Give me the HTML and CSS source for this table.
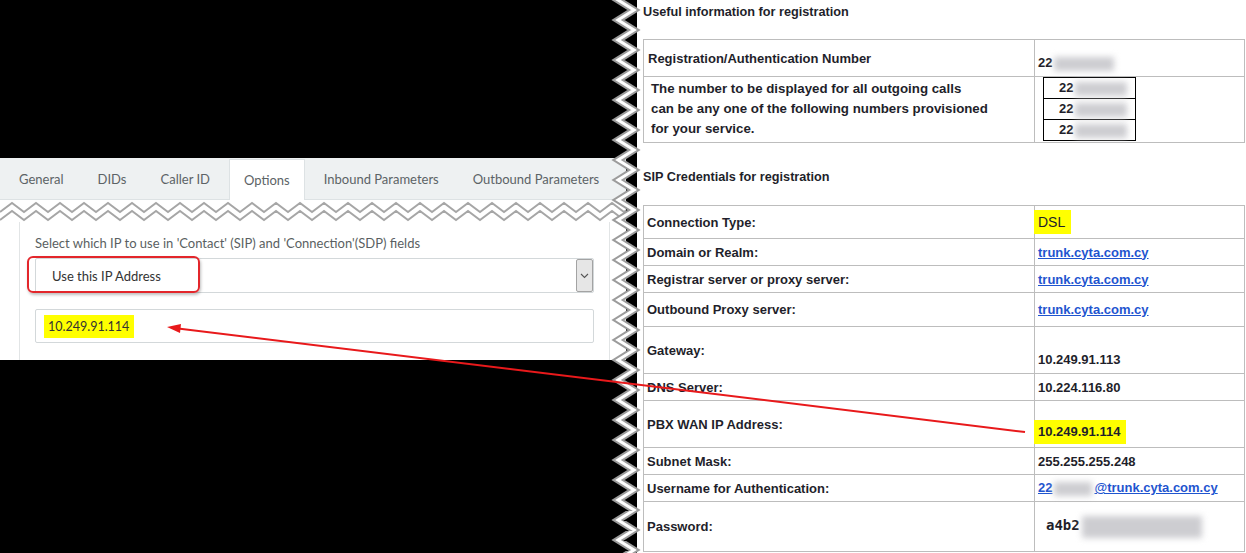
FILE: index.html
```html
<!DOCTYPE html>
<html>
<head>
<meta charset="utf-8">
<link rel="stylesheet" href="styles.css">
</head>
<body>
<div class="stage">
  <div class="left">
    <div class="app">
      <div class="tabs">
        <div class="tab">General</div>
        <div class="tab">DIDs</div>
        <div class="tab">Caller ID</div>
        <div class="tab active">Options</div>
        <div class="tab">Inbound Parameters</div>
        <div class="tab">Outbound Parameters</div>
      </div>
      <div class="tear">
        <svg width="626" height="22" viewBox="0 0 626 22">
          <polyline class="tear-line" points="0,12 12,3 24,12 36,3 48,12 60,3 72,12 84,3 96,12 108,3 120,12 132,3 144,12 156,3 168,12 180,3 192,12 204,3 216,12 228,3 240,12 252,3 264,12 276,3 288,12 300,3 312,12 324,3 336,12 348,3 360,12 372,3 384,12 396,3 408,12 420,3 432,12 444,3 456,12 468,3 480,12 492,3 504,12 516,3 528,12 540,3 552,12 564,3 576,12 588,3 600,12 612,3 624,12 636,3"/>
          <polyline class="tear-line" points="0,20 12,11 24,20 36,11 48,20 60,11 72,20 84,11 96,20 108,11 120,20 132,11 144,20 156,11 168,20 180,11 192,20 204,11 216,20 228,11 240,20 252,11 264,20 276,11 288,20 300,11 312,20 324,11 336,20 348,11 360,20 372,11 384,20 396,11 408,20 420,11 432,20 444,11 456,20 468,11 480,20 492,11 504,20 516,11 528,20 540,11 552,20 564,11 576,20 588,11 600,20 612,11 624,20 636,11"/>
        </svg>
      </div>
      <div class="panel">
        <div class="field-label">Select which IP to use in 'Contact' (SIP) and 'Connection'(SDP) fields</div>
        <div class="select">
          <span class="select-text">Use this IP Address</span>
          <span class="caret">
            <svg width="9" height="6" viewBox="0 0 9 6"><polyline points="1,1 4.5,4.5 8,1" fill="none" stroke="#555" stroke-width="1.1"/></svg>
          </span>
        </div>
        <div class="input"><span class="hl-left">10.249.91.114</span></div>
      </div>
    </div>
  </div>

  <div class="right">
    <svg class="edge" width="34" height="553" viewBox="0 0 34 553">
      <polyline class="edge-out" points="23,-10 7,0 23,10 7,20 23,30 7,40 23,50 7,60 23,70 7,80 23,90 7,100 23,110 7,120 23,130 7,140 23,150 7,160 23,170 7,180 23,190 7,200 23,210 7,220 23,230 7,240 23,250 7,260 23,270 7,280 23,290 7,300 23,310 7,320 23,330 7,340 23,350 7,360 23,370 7,380 23,390 7,400 23,410 7,420 23,430 7,440 23,450 7,460 23,470 7,480 23,490 7,500 23,510 7,520 23,530 7,540 23,550 7,560"/>
      <polyline class="edge-in" points="23,-10 7,0 23,10 7,20 23,30 7,40 23,50 7,60 23,70 7,80 23,90 7,100 23,110 7,120 23,130 7,140 23,150 7,160 23,170 7,180 23,190 7,200 23,210 7,220 23,230 7,240 23,250 7,260 23,270 7,280 23,290 7,300 23,310 7,320 23,330 7,340 23,350 7,360 23,370 7,380 23,390 7,400 23,410 7,420 23,430 7,440 23,450 7,460 23,470 7,480 23,490 7,500 23,510 7,520 23,530 7,540 23,550 7,560"/>
    </svg>

    <h3 class="heading first">Useful information for registration</h3>
    <table class="info">
      <tr class="r37">
        <td class="lbl lbl-a">Registration/Authentication Number</td>
        <td class="val val-bottom">22<span class="blur b-reg"></span></td>
      </tr>
      <tr class="r66">
        <td class="lbl para">The number to be displayed for all outgoing calls<br>can be any one of the following numbers provisioned<br>for your service.</td>
        <td class="val nums-cell">
          <table class="nums">
            <tr><td>22<span class="blur b-num"></span></td></tr>
            <tr><td>22<span class="blur b-num"></span></td></tr>
            <tr><td>22<span class="blur b-num"></span></td></tr>
          </table>
        </td>
      </tr>
    </table>

    <h3 class="heading second">SIP Credentials for registration</h3>
    <table class="info">
      <tr class="r33">
        <td class="lbl">Connection Type:</td>
        <td class="val"><span class="dsl">DSL</span></td>
      </tr>
      <tr class="r27">
        <td class="lbl">Domain or Realm:</td>
        <td class="val"><a class="link">trunk.cyta.com.cy</a></td>
      </tr>
      <tr class="r27">
        <td class="lbl">Registrar server or proxy server:</td>
        <td class="val"><a class="link">trunk.cyta.com.cy</a></td>
      </tr>
      <tr class="r34">
        <td class="lbl">Outbound Proxy server:</td>
        <td class="val"><a class="link">trunk.cyta.com.cy</a></td>
      </tr>
      <tr class="r47">
        <td class="lbl">Gateway:</td>
        <td class="val val-low">10.249.91.113</td>
      </tr>
      <tr class="r27">
        <td class="lbl">DNS Server:</td>
        <td class="val">10.224.116.80</td>
      </tr>
      <tr class="r47">
        <td class="lbl">PBX WAN IP Address:</td>
        <td class="val val-low2"><span class="hl-right">10.249.91.114</span></td>
      </tr>
      <tr class="r27">
        <td class="lbl">Subnet Mask:</td>
        <td class="val">255.255.255.248</td>
      </tr>
      <tr class="r27">
        <td class="lbl">Username for Authentication:</td>
        <td class="val"><a class="link">22<span class="blur b-user"></span>@trunk.cyta.com.cy</a></td>
      </tr>
      <tr class="r50">
        <td class="lbl">Password:</td>
        <td class="val"><span class="pw">a4b2</span><span class="blur b-pw"></span></td>
      </tr>
    </table>
  </div>

  <div class="callout"></div>
  <svg class="arrow" width="1246" height="553" viewBox="0 0 1246 553">
    <line x1="1025" y1="432" x2="178" y2="328.5" stroke="#e8191b" stroke-width="2"/>
    <polygon points="167,327 181,324 180,333" fill="#e8191b"/>
  </svg>
</div>
</body>
</html>
```

FILE: styles.css
```css
html, body {
  margin: 0;
  padding: 0;
  background: #000;
}

.stage {
  position: relative;
  width: 1246px;
  height: 553px;
  display: flex;
  background: #000;
  overflow: hidden;
}

/* ---------- left: app screenshot ---------- */
.left {
  width: 637px;
  flex: none;
  padding-top: 158px;
  box-sizing: border-box;
}

.app {
  width: 626px;
  height: 202px;
  background: #fff;
  display: flex;
  flex-direction: column;
  font-family: Lato, "Open Sans", sans-serif;
}

.tabs {
  height: 42px;
  flex: none;
  box-sizing: border-box;
  background: #eef1f2;
  border-bottom: 1px solid #dde2e4;
  display: flex;
  align-items: flex-end;
  gap: 4px;
  padding-left: 4px;
}

.tab {
  height: 40px;
  box-sizing: border-box;
  padding: 0 15px 1px;
  display: flex;
  align-items: center;
  color: #5c6366;
  font-size: 13px;
  white-space: nowrap;
}

.tab.active {
  height: 41px;
  margin-bottom: -1px;
  background: #fff;
  border: 1px solid #dde2e4;
  border-bottom: none;
  padding: 0 14px 1px;
}

.tear {
  height: 22px;
  flex: none;
  overflow: hidden;
}

.tear svg {
  display: block;
}

.tear-line {
  fill: none;
  stroke: #a6a6a6;
  stroke-width: 2;
}

.panel {
  flex: 1;
  margin-left: 19px;
  width: 591px;
  box-sizing: border-box;
  border-left: 1px solid #e2e5e6;
  border-right: 1px solid #e2e5e6;
  padding: 12px 15px 0 15px;
}

.field-label {
  font-size: 13px;
  line-height: 18px;
  color: #5a5f62;
  white-space: nowrap;
}

.select {
  margin-top: 6px;
  height: 35px;
  box-sizing: border-box;
  border: 1px solid #d3d8da;
  border-radius: 2px;
  display: flex;
  align-items: stretch;
}

.select-text {
  flex: 1;
  padding-left: 16px;
  display: flex;
  align-items: center;
  font-size: 13px;
  color: #333;
}

.caret {
  width: 17px;
  box-sizing: border-box;
  background: #e6e6e6;
  border: 1px solid #a3a3a3;
  border-radius: 2px;
  display: flex;
  align-items: center;
  justify-content: center;
}

.caret svg {
  display: block;
}

.input {
  margin-top: 16px;
  height: 34px;
  box-sizing: border-box;
  border: 1px solid #d3d8da;
  border-radius: 2px;
  padding-left: 8px;
  display: flex;
  align-items: center;
}

.hl-left {
  background: #ffff00;
  color: #333;
  font-size: 12.5px;
  line-height: 23px;
  padding: 0 5px 0 4px;
}

/* ---------- right: info page ---------- */
.right {
  flex: 1;
  position: relative;
  background: #fff;
  padding: 0 1px 0 6px;
  font-family: "Liberation Sans", Arial, sans-serif;
  color: #1f1f2b;
}

.edge {
  position: absolute;
  left: -26px;
  top: 0;
}

.edge-out {
  fill: none;
  stroke: #9c9c9c;
  stroke-width: 7;
}

.edge-in {
  fill: none;
  stroke: #fff;
  stroke-width: 3;
}

.heading {
  margin: 0;
  font-size: 12.7px;
  font-weight: bold;
  line-height: 14px;
}

.heading.first {
  padding-top: 5px;
  margin-bottom: 20px;
}

.heading.second {
  margin-top: 27px;
  margin-bottom: 21px;
}

.info {
  width: 602px;
  border-collapse: collapse;
  font-size: 13px;
  font-weight: bold;
}

.info > tbody > tr > td {
  border: 1px solid #bdbdbd;
  padding: 0 3px;
  line-height: 15px;
  vertical-align: middle;
}

.info > tbody > tr > td.lbl {
  width: 384px;
}

.info > tbody > tr > td.lbl-a {
  width: 383px;
  padding-left: 4px;
}

.info > tbody > tr > td.para {
  width: 376px;
  padding: 2px 7px 0;
  line-height: 20px;
  font-size: 13.3px;
  vertical-align: top;
}

.r27 { height: 27px; }
.r33 { height: 33px; }
.r34 { height: 34px; }
.r37 { height: 37px; }
.r47 { height: 47px; }
.r50 { height: 50px; }
.r66 { height: 66px; }

.info td.val-bottom {
  vertical-align: bottom;
  padding-bottom: 5px;
}

.info td.val-low {
  vertical-align: bottom;
  padding-bottom: 6px;
}

.info td.val-low2 {
  vertical-align: bottom;
  padding: 0 0 3px 0;
}

.info td.nums-cell {
  vertical-align: top;
  padding: 0 0 0 8px;
}

.nums {
  border-collapse: collapse;
  width: 93px;
}

.nums td {
  border: 1px solid #000;
  height: 20px;
  padding: 0 0 0 15px;
  line-height: 15px;
  white-space: nowrap;
  vertical-align: middle;
}

.blur {
  display: inline-block;
  vertical-align: middle;
  height: 14px;
  background: #cdcdd1;
  filter: blur(3px);
}

.b-reg { width: 60px; margin-left: 2px; }
.b-num { width: 52px; margin-left: 2px; }
.b-user { width: 38px; margin: 0 2px; }
.b-pw { width: 120px; height: 22px; margin-left: 2px; }

.dsl {
  display: inline-block;
  background: #ffff00;
  font-weight: normal;
  font-size: 14px;
  line-height: 24px;
  padding: 0 6px 0 4px;
  margin-left: -4px;
}

.link {
  color: #1f55cf;
  text-decoration: underline;
}

.hl-right {
  display: inline-block;
  background: #ffff00;
  line-height: 24px;
  padding: 0 6px 0 4px;
  margin-left: -1px;
}

.pw {
  font-family: "DejaVu Sans Mono", "Liberation Mono", monospace;
  font-size: 14px;
  margin-left: 8px;
}

/* ---------- overlays ---------- */
.callout {
  position: absolute;
  left: 27px;
  top: 256px;
  width: 173px;
  height: 37px;
  box-sizing: border-box;
  border: 2px solid #e3262b;
  border-radius: 6px;
  box-shadow: 1px 2px 3px rgba(0, 0, 0, 0.25);
}

.arrow {
  position: absolute;
  left: 0;
  top: 0;
  pointer-events: none;
}
```
